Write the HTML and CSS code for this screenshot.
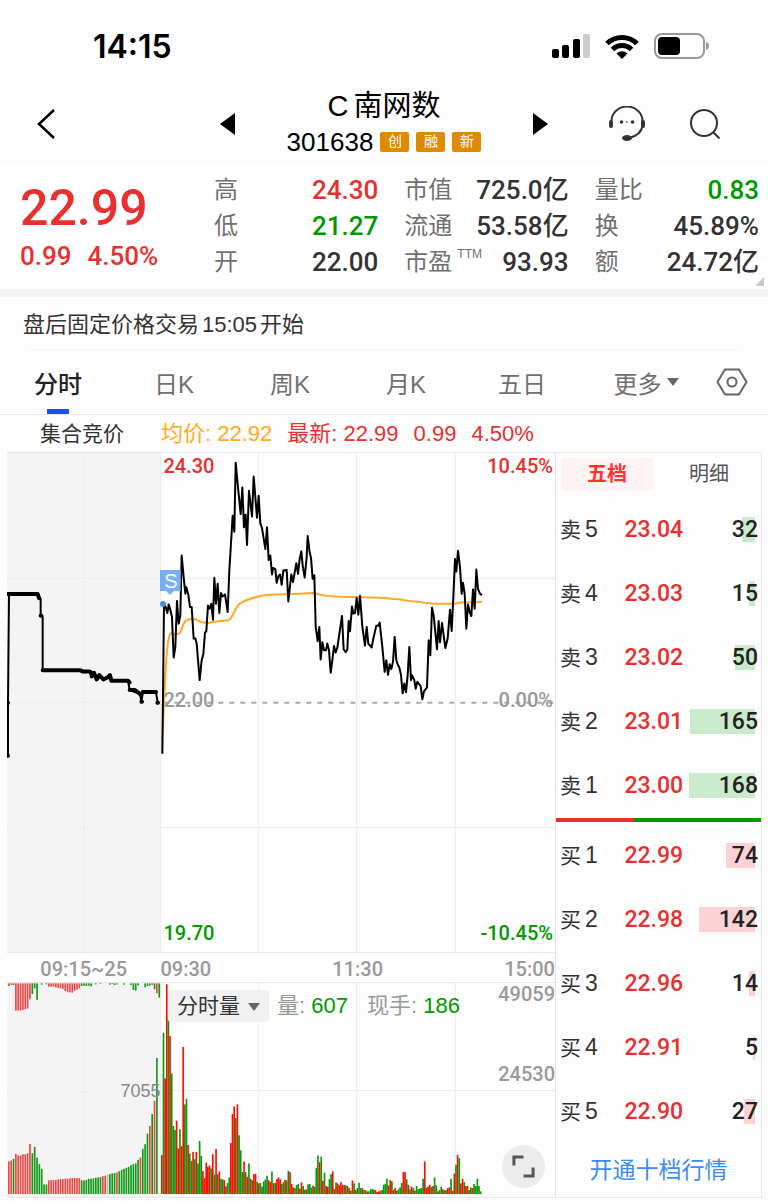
FILE: index.html
```html
<!DOCTYPE html>
<html lang="zh-CN">
<head>
    <meta charset="UTF-8">
    <meta name="viewport" content="width=device-width, initial-scale=1.0">
    <title>C南网数 301638</title>
    <link rel="stylesheet" href="styles.css">
</head>
<body>
    <div class="status">
        <span class="time">14:15</span>
        <div class="signs">
            <svg width="38" height="24" viewBox="0 0 38 24">
                <rect x="0" y="15" width="7" height="9" rx="2"/>
                <rect x="10" y="11" width="7" height="13" rx="2"/>
                <rect x="21" y="5" width="7" height="19" rx="2"/>
                <rect x="31" y="0" width="7" height="24" rx="2" fill="#ccc"/>
            </svg>
            <svg width="34" height="25" viewBox="0 0 34 25">
                <g fill="none" stroke="#000" stroke-width="5">
                    <path d="M2 9.500a21.500 21.500 0 0 1 30 0"/>
                    <path d="M7.500 15.500a13.500 13.500 0 0 1 19 0"/>
                </g>
                <path d="M17 25l-5.500-5.500a8 8 0 0 1 11 0z"/>
            </svg>
            <svg width="56" height="26" viewBox="0 0 56 26">
                <rect x="1" y="1" width="49" height="24" rx="7" fill="none" stroke="#999" stroke-width="2"/>
                <rect x="4" y="4" width="22" height="18" rx="4"/>
                <path d="M52 9c4 1 4 7 0 8z" fill="#999"/>
            </svg>
        </div>
    </div>

    <header class="header">
        <button class="back" aria-label="返回">
            <svg width="20" height="32" viewBox="0 0 20 32"><path d="M18 2L3 16l15 14" fill="none" stroke="#000" stroke-width="2.500"/></svg>
        </button>
        <div class="stock">
            <button aria-label="上一个"><svg width="16" height="22" viewBox="0 0 16 22"><path d="M15 0v22L0 11z"/></svg></button>
            <div class="title">
                <h1><span>C</span>南网数</h1>
                <p>301638 <i>创</i><i>融</i><i>新</i></p>
            </div>
            <button aria-label="下一个"><svg width="16" height="22" viewBox="0 0 16 22"><path d="M1 0v22l15-11z"/></svg></button>
        </div>
        <div class="tools">
            <button aria-label="客服">
                <svg width="38" height="36" viewBox="0 0 38 36">
                    <path d="M3.500 15a15.500 14.500 0 0 1 31 0v5c-1 6-6 10-13 12" fill="none" stroke="#333" stroke-width="2"/>
                    <rect x="1" y="14" width="4" height="8" rx="2" fill="#333"/>
                    <rect x="33" y="14" width="4" height="8" rx="2" fill="#333"/>
                    <circle cx="13.500" cy="16" r="1.800" fill="#333"/>
                    <circle cx="19" cy="16" r="1" fill="#777"/>
                    <circle cx="24.500" cy="16" r="1.800" fill="#333"/>
                    <ellipse cx="19" cy="32" rx="5" ry="3" fill="#333"/>
                </svg>
            </button>
            <button aria-label="搜索">
                <svg width="30" height="30" viewBox="0 0 30 30"><g fill="none" stroke="#333" stroke-width="2"><circle cx="14" cy="14" r="13"/><path d="M23 23l6.500 6.500"/></g></svg>
            </button>
        </div>
    </header>

    <section class="quote">
        <div class="price">
            <strong>22.99</strong>
            <span>0.99</span><span>4.50%</span>
        </div>
        <dl class="fields">
            <div><dt>高</dt><dd class="red">24.30</dd></div>
            <div><dt>市值</dt><dd>725.0亿</dd></div>
            <div><dt>量比</dt><dd class="green">0.83</dd></div>
            <div><dt>低</dt><dd class="green">21.27</dd></div>
            <div><dt>流通</dt><dd>53.58亿</dd></div>
            <div><dt>换</dt><dd>45.89%</dd></div>
            <div><dt>开</dt><dd>22.00</dd></div>
            <div><dt>市盈<sup>TTM</sup></dt><dd>93.93</dd></div>
            <div><dt>额</dt><dd>24.72亿</dd></div>
        </dl>
        <span class="corner"></span>
    </section>

    <p class="notice">盘后固定价格交易<span>15:05</span>开始</p>

    <nav class="tabs">
        <button class="on">分时</button>
        <button>日K</button>
        <button>周K</button>
        <button>月K</button>
        <button>五日</button>
        <button class="more">更多<i class="down"></i></button>
        <button aria-label="设置">
            <svg width="32" height="28" viewBox="0 0 32 28"><g fill="none" stroke="#666" stroke-width="2"><path d="M9 1.500h14L30.500 14 23 26.500H9L1.500 14z"/><circle cx="16" cy="14" r="4.500"/></g></svg>
        </button>
    </nav>

    <div class="legend">
        <span class="auction">集合竞价</span>
        <span class="avg">均价: 22.92</span>
        <span class="red">最新: 22.99</span>
        <span class="red">0.99</span>
        <span class="red">4.50%</span>
    </div>

    <main class="main">
        <div class="charts">
            <div class="kline">
                <!-- 3 units = 1px -->
                <svg viewBox="21 6 1644 1503" preserveAspectRatio="none">
                    <rect class="shade" x="21" y="6" width="461" height="1503"/>
                    <path class="dot" d="M254 6V1509M21 383H482M21 758H482M21 1134H482"/>
                    <path class="grid" d="M482 383H1665M482 1134H1665M482 6V1509M776 6V1509M1070 6V1509M1366 6V1509"/>
                    <path class="zero" d="M490 758H1665"/>
                    <path class="thin" d="M24 918V755L27 431H113L122 446V496L128 498V660H240L268 664L275 679L282 668L290 688L298 675L310 688L330 675L334 692H384L389 720L420 732L424 755L429 726H468L473 758"/>
                    <path class="thick" d="M24 431H113L117 443M122 496h2M128 660H240L248 664H268L275 668V679L282 668L290 688L298 675L310 688L322 682L330 675L334 692H384L389 697M389 720H405L420 732M424 755h2M428 726H468M472 758h2M23 918h1M23 758h1"/>
                    <path class="avgline" d="M487 870L492 750L500 610C505 560 510 548 514 549C525 553 535 553 541 547C550 520 555 507 568 507H588C595 510 600 518 625 518C645 512 665 512 685 510C700 505 705 465 722 458C740 448 770 438 800 434C850 430 900 430 945 428C965 436 1000 440 1070 440C1110 442 1150 440 1180 446C1200 446 1220 452 1265 455C1280 461 1330 460 1365 460L1385 456L1446 455"/>
                    <polyline class="now" points="487,912 492,462 497,470 502,488 506,462 510,475 516,500 521,622 526,590 531,452 536,520 541,495 545,315 551,380 556,430 559,410 565,433 570,470 575,470 581,565 586,565 590,580 599,690 605,630 610,612 615,547 619,543 624,465 629,475 634,460 639,508 643,382 648,460 653,400 658,488 663,428 668,438 675,432 683,485 688,360 698,195 703,243 707,35 713,100 722,190 727,110 732,230 737,192 741,283 747,120 756,197 761,77 771,201 776,135 781,218 786,232 796,295 801,230 806,328 811,315 816,372 819,352 826,356 830,397 835,377 840,372 845,403 850,360 860,358 865,453 874,372 879,395 889,338 894,370 899,325 904,302 908,345 914,381 920,320 923,256 929,305 933,322 938,385 943,374 947,528 953,573 958,530 962,628 967,576 972,600 978,600 982,580 987,600 992,668 998,622 1002,587 1007,607 1012,592 1026,497 1031,597 1037,606 1042,598 1046,512 1050,543 1056,468 1060,490 1065,488 1070,443 1075,493 1080,436 1087,528 1095,586 1100,530 1105,580 1115,592 1120,565 1129,526 1135,526 1139,517 1147,590 1154,665 1159,630 1164,674 1169,642 1174,657 1179,635 1184,560 1189,630 1193,643 1198,652 1203,675 1208,730 1213,700 1218,727 1223,675 1228,590 1233,690 1236,675 1243,690 1247,716 1252,695 1262,708 1267,748 1272,724 1281,712 1286,570 1291,615 1296,472 1301,495 1311,597 1316,512 1320,576 1326,518 1336,593 1343,565 1350,478 1355,542 1360,440 1365,325 1369,363 1374,301 1380,350 1385,430 1389,397 1394,430 1399,535 1404,462 1409,485 1414,497 1419,417 1424,475 1429,357 1434,415 1440,430 1446,434"/>
                </svg>
                <div class="marks">
                    <span class="tl red">24.30</span><span class="tr red">10.45%</span>
                    <span class="ml">22.00</span><span class="mr">0.00%</span>
                    <span class="bl green">19.70</span><span class="br green">-10.45%</span>
                    <b class="sell">S</b>
                </div>
            </div>
            <div class="axis">
                <span>09:15~25</span>
                <div><span>09:30</span><span>11:30</span><span>15:00</span></div>
            </div>
            <div class="volume">
                <svg viewBox="21 246 1644 645" preserveAspectRatio="none">
                    <rect class="shade" x="21" y="246" width="461" height="645"/>
                    <path class="dot" d="M254 246V891M21 573H482"/>
                    <path class="grid" d="M482 570H1665M482 246V891M776 246V891M1070 246V891M1366 246V891"/>
                    <g id="bars"></g>
                </svg>
                <div class="volbar">
                    <label>
                        <select aria-label="副图指标"><option>分时量</option></select>
                        <i class="down"></i>
                    </label>
                    <span>量: <em>607</em></span>
                    <span>现手: <em>186</em></span>
                </div>
                <span class="vmax">49059</span>
                <span class="vmid">24530</span>
                <span class="vauc">7055</span>
                <button class="full" aria-label="全屏">
                    <svg width="24" height="24" viewBox="0 0 24 24"><path d="M2 11V2h10M22 13v9H12" fill="none" stroke="#555" stroke-width="3"/></svg>
                </button>
            </div>
        </div>

        <aside class="book">
            <div class="switch">
                <button class="on">五档</button>
                <button>明细</button>
            </div>
            <table class="sells">
                <tr><th>卖<span>5</span></th><td>23.04</td><td class="num"><i style="width:13px"></i><b>32</b></td></tr>
                <tr><th>卖<span>4</span></th><td>23.03</td><td class="num"><i style="width:6px"></i><b>15</b></td></tr>
                <tr><th>卖<span>3</span></th><td>23.02</td><td class="num"><i style="width:20px"></i><b>50</b></td></tr>
                <tr><th>卖<span>2</span></th><td>23.01</td><td class="num"><i style="width:65px"></i><b>165</b></td></tr>
                <tr><th>卖<span>1</span></th><td>23.00</td><td class="num"><i style="width:66px"></i><b>168</b></td></tr>
            </table>
            <div class="ratio"><i style="width:38%"></i></div>
            <table class="buys">
                <tr><th>买<span>1</span></th><td>22.99</td><td class="num"><i style="width:29px"></i><b>74</b></td></tr>
                <tr><th>买<span>2</span></th><td>22.98</td><td class="num"><i style="width:56px"></i><b>142</b></td></tr>
                <tr><th>买<span>3</span></th><td>22.96</td><td class="num"><i style="width:6px"></i><b>14</b></td></tr>
                <tr><th>买<span>4</span></th><td>22.91</td><td class="num"><i style="width:2px"></i><b>5</b></td></tr>
                <tr><th>买<span>5</span></th><td>22.90</td><td class="num"><i style="width:11px"></i><b>27</b></td></tr>
            </table>
            <a class="open" href="#">开通十档行情</a>
        </aside>
    </main>
    <script src="script.js"></script>
</body>
</html>
```
FILE: styles.css
```css
*{
    margin: 0;
    padding: 0;
    box-sizing: border-box;
}
body{
    background: #fdfdfd;
    color: #333;
    font-family: "Liberation Sans", "Noto Sans CJK SC", sans-serif;
    font-size: 22px;
    padding-bottom: 6px;
}
button, select{
    border: none;
    background: none;
    font: inherit;
    color: inherit;
}
svg{
    display: block;
}
i, em{
    font-style: normal;
}
.red{
    color: #e83030;
}
.green{
    color: #090;
}
.down{
    display: inline-block;
    border: 6px solid transparent;
    border-top: 8px solid #666;
    border-bottom: 0;
}

/* 状态栏 */
.status{
    height: 88px;
    padding: 4px 58px 0 93px;
    display: flex;
    align-items: center;
    justify-content: space-between;
}
.status .time{
    font: 600 32px Inter, sans-serif;
    color: #000;
}
.status .signs{
    display: flex;
    align-items: center;
    gap: 15px;
}

/* 标题 */
.header{
    height: 75px;
    padding-bottom: 2px;
    display: grid;
    grid-template-columns: 1fr 328px 1fr;
    align-items: center;
    border-bottom: 1px solid #f8f8f8;
    color: #000;
}
.header .back{
    justify-self: start;
    padding-left: 36px;
}
.header .stock{
    display: flex;
    align-items: center;
    justify-content: space-between;
}
.header .title{
    text-align: center;
}
.header h1{
    font-size: 29px;
    font-weight: 400;
    line-height: 36px;
}
.header h1 span{
    margin-right: 5px;
}
.header p{
    display: flex;
    align-items: center;
    gap: 7px;
    font-size: 26px;
    line-height: 36px;
}
.header p i{
    width: 29px;
    height: 20px;
    border-radius: 2px;
    background: #e08a00;
    color: #fff;
    font-size: 14px;
    line-height: 19px;
}
.header .tools{
    display: flex;
    align-items: center;
    justify-content: flex-end;
    gap: 44px;
    padding-right: 48px;
}

/* 行情 */
.quote{
    position: relative;
    display: flex;
    height: 126px;
    padding: 9px 9px 0 20px;
    background: #fff;
}
.quote .price{
    width: 194px;
    color: #e83030;
    font-family: Roboto, sans-serif;
    font-weight: 500;
}
.quote .price strong{
    display: block;
    font-size: 50px;
    font-weight: 500;
    line-height: 72px;
}
.quote .price span{
    margin-right: 16px;
    font-size: 26px;
    line-height: 24px;
}
.quote .fields{
    flex: 1;
    display: grid;
    grid-template-columns: 1fr 1fr 1fr;
    grid-auto-rows: 36px;
    column-gap: 26px;
}
.quote .fields div{
    display: flex;
    justify-content: space-between;
    line-height: 36px;
    white-space: nowrap;
}
.quote dt{
    color: #707070;
    font-size: 24px;
}
.quote dt sup{
    margin-left: 5px;
    font-size: 12px;
    line-height: 12px;
    vertical-align: 12px;
}
.quote dd{
    font-family: Roboto, "Noto Sans CJK SC", sans-serif;
    font-size: 26px;
    font-weight: 500;
}
.quote .corner{
    position: absolute;
    right: 4px;
    bottom: 3px;
    border-left: 9px solid transparent;
    border-bottom: 9px solid #c8c8c8;
}
.notice{
    padding: 4px 23px 0;
    border-top: 8px solid #f3f3f3;
    line-height: 48px;
}
.notice span{
    margin: 0 3px;
}
.notice:after{
    content: "";
    display: block;
    height: 1px;
    margin: 0 6px;
    background: #f3f3f3;
}

/* 周期 */
.tabs{
    display: grid;
    grid-template-columns: repeat(6, 1fr) 72px;
    height: 65px;
    border-bottom: 1px solid #e8e8e8;
    font-size: 24px;
    color: #707070;
}
.tabs button{
    position: relative;
    display: flex;
    align-items: center;
    justify-content: center;
}
.tabs .on{
    color: #222;
    font-weight: 500;
}
.tabs .on:after{
    content: "";
    position: absolute;
    bottom: 0;
    width: 22px;
    height: 5px;
    background: #204cff;
}
.tabs .more{
    gap: 5px;
    padding-left: 16px;
}
.legend{
    display: flex;
    gap: 15px;
    height: 37px;
    padding: 0 7px;
    line-height: 38px;
    white-space: nowrap;
}
.legend .auction{
    width: 139px;
    padding-left: 33px;
    font-size: 21px;
}
.legend .avg{
    color: #ffaa1a;
}

/* 图表 */
.main{
    display: flex;
    margin: 0 6px 0 7px;
}
.charts{
    flex: 1;
    min-width: 0;
    border-right: 1px solid #e4e4e4;
    color: #999;
    font: 500 20px Roboto, sans-serif;
}
.charts svg{
    width: 100%;
    height: 100%;
}
.charts path, .charts polyline{
    fill: none;
    vector-effect: non-scaling-stroke;
}
.shade{
    fill: #f4f4f4;
}
.charts .grid{
    stroke: #ececec;
}
.charts .dot{
    stroke: #e6e6e6;
    stroke-dasharray: 2 2;
}
.charts .zero{
    stroke: #aaa;
    stroke-dasharray: 5 6;
    stroke-width: 2px;
}
.charts .thin, .charts .now{
    stroke: #000;
    stroke-width: 2px;
    stroke-linejoin: round;
}
.charts .thick{
    stroke: #000;
    stroke-width: 4px;
    stroke-linecap: round;
    stroke-linejoin: round;
}
.charts .avgline{
    stroke: #ffa726;
    stroke-width: 2px;
}
.kline, .volume{
    position: relative;
    border: 1px solid #e8e8e8;
    border-width: 1px 0;
}
.kline{
    height: 501px;
}
.volume{
    height: 216px;
}
/* 右侧交易时段上的刻度 */
.marks{
    position: absolute;
    top: 0;
    bottom: 0;
    right: 2px;
    left: 28%;
    line-height: 24px;
}
.marks span, .marks b{
    position: absolute;
}
.tl, .bl, .ml{
    left: 3px;
}
.tr, .br, .mr{
    right: 0;
}
.tl, .tr{
    top: 1px;
}
.ml, .mr{
    bottom: 50%;
    margin-bottom: -9px;
}
.bl, .br{
    bottom: 7px;
}
.marks .sell{
    left: 0;
    top: 117px;
    width: 21px;
    height: 21px;
    background: rgba(90, 155, 240, .8);
    color: #fff;
    font: 20px/22px "Liberation Sans", sans-serif;
    text-align: center;
}
.sell:before{
    content: "";
    position: absolute;
    left: 6px;
    top: 21px;
    border: 4px solid transparent;
    border-top-color: rgba(90, 155, 240, .8);
}
.sell:after{
    content: "";
    position: absolute;
    left: 0;
    top: 31px;
    width: 6px;
    height: 6px;
    border-radius: 50%;
    background: #4a8be0;
}
.axis{
    display: grid;
    grid-template-columns: 28% 72%;
    line-height: 32px;
    height: 29px;
    text-align: center;
}
.axis div{
    display: flex;
    justify-content: space-between;
}
.volbar{
    position: absolute;
    left: 161px;
    top: 7px;
    display: flex;
    gap: 19px;
    font: 22px/32px "Liberation Sans", "Noto Sans CJK SC", sans-serif;
}
.volbar label{
    position: relative;
    margin-right: -11px;
}
.volbar select{
    appearance: none;
    display: block;
    width: 101px;
    height: 32px;
    padding-left: 9px;
    border-radius: 3px;
    background: rgba(240, 240, 240, .9);
    color: #333;
    font-size: 21px;
}
.volbar .down{
    position: absolute;
    right: 9px;
    top: 13px;
}
.volbar em{
    color: #090;
}
.vmax, .vmid, .vauc{
    position: absolute;
    line-height: 22px;
}
.vmax{
    right: 0;
    top: 0;
}
.vmid{
    right: 0;
    top: 80px;
}
.vauc{
    right: 72%;
    top: 97px;
    color: #888;
    font: 18px/22px "Liberation Sans", sans-serif;
}
.full{
    position: absolute;
    right: 10px;
    bottom: 9px;
    width: 43px;
    height: 43px;
    padding: 10px;
    border-radius: 50%;
    background: #ececec;
}

/* 五档 */
.book{
    width: 206px;
    border: 1px solid #e8e8e8;
    border-left: none;
    text-align: center;
}
.switch{
    display: flex;
    padding: 5px 5px 6px;
    font-size: 20px;
    line-height: 33px;
    color: #555;
}
.switch button{
    flex: 1;
    height: 33px;
    margin-left: 9px;
    border-radius: 3px;
}
.switch .on{
    flex: none;
    width: 92px;
    margin-left: 0;
    background: #fff2f3;
    color: #f33;
    font-weight: 700;
}
.book table{
    width: 100%;
    border-collapse: collapse;
    table-layout: fixed;
    font-family: Roboto, sans-serif;
}
.book tr{
    height: 64px;
}
.book th{
    width: 62px;
    padding: 0 0 3px 4px;
    text-align: left;
    font: 21px "Liberation Sans", "Noto Sans CJK SC", sans-serif;
}
.book th span{
    margin-left: 4px;
    font-size: 23px;
}
.book td{
    color: #e83030;
    font-size: 23px;
    font-weight: 500;
}
.book .num{
    position: relative;
    padding-right: 3px;
    text-align: right;
    color: #222;
}
.num b{
    position: relative;
    font-weight: 500;
}
.num i{
    position: absolute;
    right: 6px;
    top: 20px;
    height: 25px;
    background: #c9eacb;
}
.buys .num i{
    background: #fcd3d5;
}
.ratio{
    height: 4px;
    margin: 1px 0;
    background: #090;
}
.ratio i{
    display: block;
    height: 4px;
    background: #e83030;
}
.open{
    display: block;
    color: #3f8cf0;
    font-size: 23px;
    line-height: 54px;
    text-decoration: none;
}
```
FILE: script.js
```js
var box = document.getElementById('bars');
var colors = { r: '#ff0d00', g: '#0a970a', s: '#bbb' };
var soft = { r: '#ea4747', g: '#119a19', s: '#bbb' };

// r 涨 g 跌 s 平，数字为柱高
var auction = 'r98 r101 g106 r121 r116 r116 r120 r120 r123 r151 g123 g142 g110 g90 g76 g29 g29 r41 r42 r42 r42 r44 r45 r45 r46 r46 r47 r48 r48 r48 r48 g41 g41 g42 g46 g46 g47 g49 g50 g51 r54 r55 s58 g60 g62 g63 r65 g69 g73 g76 g79 g82 g87 g90 g92 g103 r110 g136 g150 g182 r205 g241 r281 g410';
var unmatched = 'r8 r5 g5 r82 r82 r82 r80 r78 r76 r48 g32 g15 g50 g0 g4 g0 g3 r10 r10 r10 r12 r14 r15 r17 r23 r27 r27 r28 r22 r19 r15 g8 g7 g8 g7 g9 g0 g3 g0 g2 g0 g0 g0 g4 g2 g5 g3 g0 g0 g4 g0 g0 g5 g20 g22 g6 g0 g0 g12 g8 g7 r5 g18 r30 g43';
var session = 'r117 g486 r348 r632 g528 r476 g363 g205 g193 r221 r137 g195 r144 r443 g270 g287 r148 g122 g100 r127 g105 r127 g92 g160 g115 r69 r48 r95 r82 r86 g77 r120 g58 r136 g60 r68 g46 g44 r42 r23 g33 g50 r154 r241 r264 g229 r270 g177 g132 g66 r98 g66 r52 g92 r46 g42 r60 r61 g37 r32 g33 g22 g38 g44 g55 r42 r37 g68 r33 g34 r45 r50 r44 g30 g36 r43 g41 g70 ' +
    'r66 r30 r20 g18 g27 g30 r16 r35 g24 g13 r14 g29 g30 g19 r25 g22 g78 g116 r96 g112 r40 g64 r24 r22 g45 g60 r68 r15 g35 r32 r26 r36 r28 g27 r26 g24 r18 g10 r41 g32 r12 g18 g34 g18 r18 g12 g12 r8 g8 g14 g15 g13 r12 r6 r8 r10 g12 g28 g30 g46 r26 r42 g38 r12 r18 g10 g14 g20 g33 r66 r66 g44 r28 g14 r22 g18 r10 g24 g14 g16 g18 g46 r98 r18 r22 r28 g22 r24 g50 g26 r8 g12 g22 r14 g12 g12 r18 r20 g46 r10 r62 g88 r118 g108 r32 r46 g36 r24 r24 g12 g20 r18 g30 g24 g46 g24 g8';

function draw(data, x, step, width, top, palette) {
    data.split(' ').forEach(function (item, i) {
        var h = Number(item.slice(1));
        var rect = document.createElementNS('http://www.w3.org/2000/svg', 'rect');
        rect.setAttribute('x', x + i * step);
        rect.setAttribute('y', top ? 247 : 882 - h);
        rect.setAttribute('width', width);
        rect.setAttribute('height', h);
        rect.setAttribute('fill', palette[item[0]]);
        box.appendChild(rect);
    });
}

draw(auction, 24, 7.05, 5, false, soft);
draw(unmatched, 24, 7.05, 5, true, soft);
draw(session, 483, 4.93, 5, false, colors);
```
